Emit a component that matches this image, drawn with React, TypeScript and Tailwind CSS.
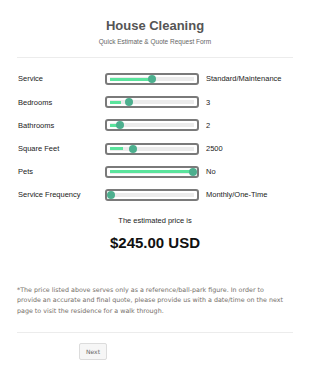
import React from 'react';

const rows = [
  { label: 'Service', value: 'Standard/Maintenance', fill: 42, thumb: 42 },
  { label: 'Bedrooms', value: '3', fill: 11, thumb: 19 },
  { label: 'Bathrooms', value: '2', fill: 7, thumb: 10 },
  { label: 'Square Feet', value: '2500', fill: 13, thumb: 23 },
  { label: 'Pets', value: 'No', fill: 83, thumb: 83 },
  { label: 'Service Frequency', value: 'Monthly/One-Time', fill: 0, thumb: 1 },
];

const Slider = ({ fill, thumb }: { fill: number; thumb: number }) => (
  <div className="w-[94px] h-[12px] shrink-0 border-2 border-[#7a7a7a] rounded-[3px] bg-white px-[3px] flex items-center">
    <div className="relative w-full h-[4px] bg-[#ebebeb]">
      <div className="absolute left-0 top-[0.5px] h-[3px] bg-[#5be49d]" style={{ width: fill }} />
      <div
        className="absolute top-1/2 w-[8px] h-[8px] -mt-[4px] -ml-[4px] rounded-full bg-[#4caf8e]"
        style={{ left: thumb }}
      />
    </div>
  </div>
);

export default function App() {
  return (
    <div className="w-[310px] h-[371px] bg-white px-[17px] font-['Liberation_Sans',Arial,sans-serif] overflow-hidden">
      <div className="pt-[18px] text-center">
        <h1 className="text-[13px] leading-[16px] font-bold text-[#555]">House Cleaning</h1>
        <p className="mt-[4px] text-[6.5px] leading-[8px] text-[#666]">Quick Estimate &amp; Quote Request Form</p>
      </div>
      <div className="mt-[11px] h-px bg-[#ececec]" />

      <div className="mt-[15px] flex flex-col gap-[11.2px]">
        {rows.map((r, i) => (
          <div key={i} className="flex items-center h-[12px]">
            <span className="w-[88px] pl-px text-[7.5px] text-[#222]">{r.label}</span>
            <Slider fill={r.fill} thumb={r.thumb} />
            <span className="ml-[7px] text-[7.5px] text-[#222]">{r.value}</span>
          </div>
        ))}
      </div>

      <div className="mt-[15px] text-center">
        <p className="text-[7.5px] leading-[10px] text-[#222]">The estimated price is</p>
        <p className="mt-[8px] text-[15px] leading-[18px] font-bold text-[#111]">$245.00 USD</p>
      </div>

      <p className="mt-[33px] whitespace-nowrap text-[6.35px] leading-[10.5px] text-[#76706a] font-['DejaVu_Sans',Verdana,sans-serif]">
        *The price listed above serves only as a reference/ball-park figure. In order to
        <br />
        provide an accurate and final quote, please provide us with a date/time on the next
        <br />
        page to visit the residence for a walk through.
      </p>
      <div className="mt-[16px] h-px bg-[#ececec]" />

      <div className="mt-[10px] pl-[62px] flex">
        <button className="w-[28px] h-[17px] border border-[#dcdcdc] rounded-[2px] bg-[#f6f6f6] text-[6px] leading-none text-[#666] font-['DejaVu_Sans',Verdana,sans-serif]">
          Next
        </button>
      </div>
    </div>
  );
}
